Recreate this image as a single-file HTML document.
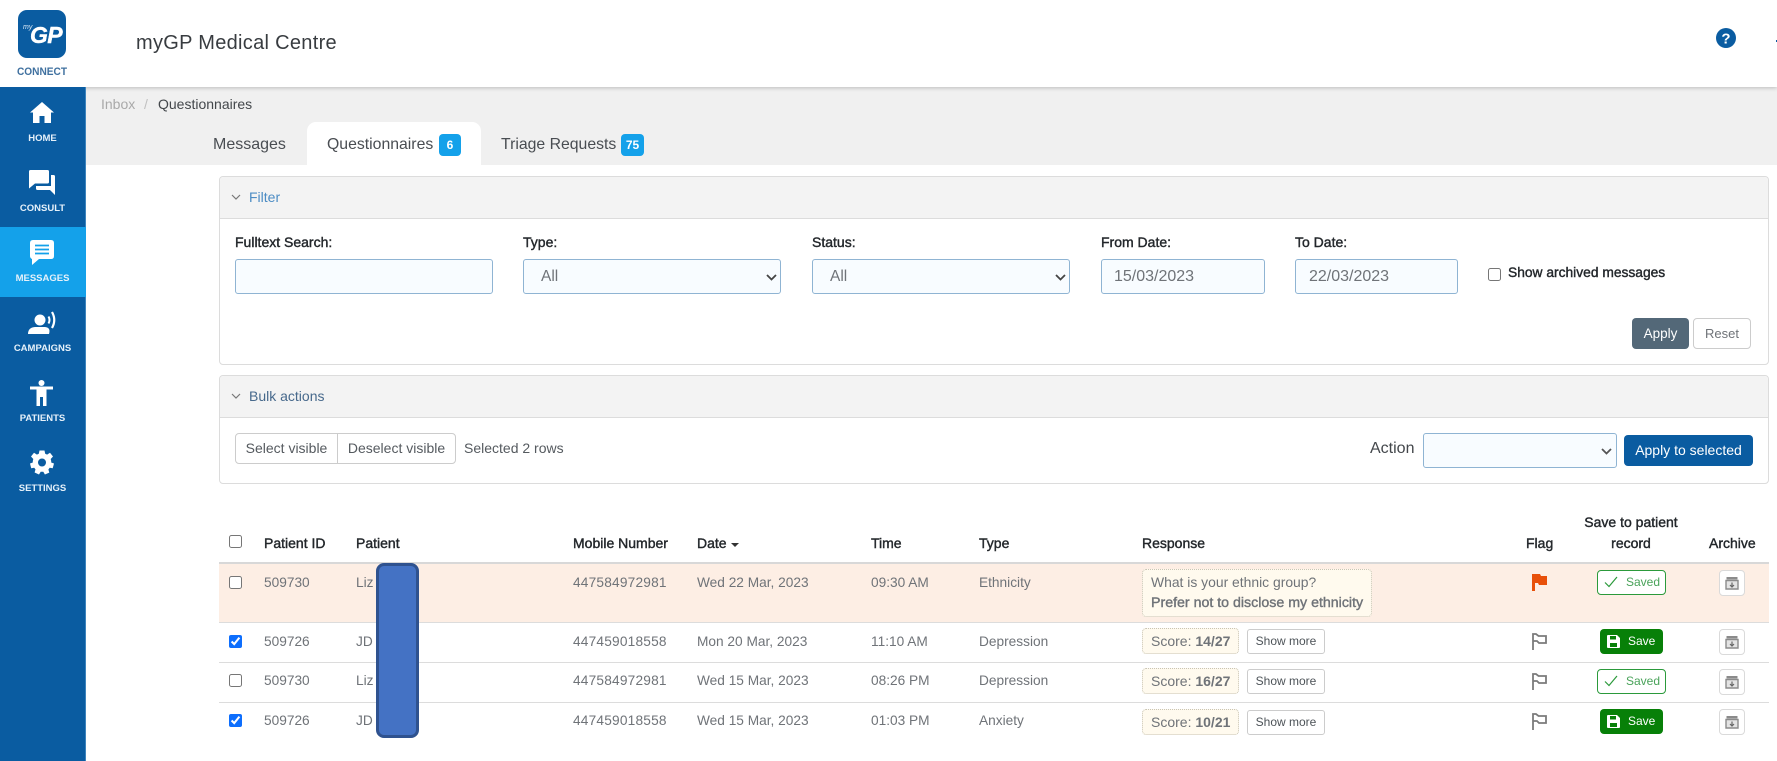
<!DOCTYPE html>
<html lang="en"><head><meta charset="utf-8"><title>myGP Connect</title>
<style>
*{box-sizing:border-box}
html,body{margin:0;padding:0;width:1777px;height:761px;overflow:hidden;background:#fff;font-family:"Liberation Sans",Arial,sans-serif;font-size:14px;color:#212529}
.a,.t{position:absolute}
.t{line-height:20px;white-space:nowrap}
.c{transform:translateX(-50%);text-align:center}
.m{-webkit-text-stroke:.4px currentColor}
.d{color:#6f7378;font-size:13.7px}
.n{letter-spacing:.2px}
.h{color:#23272b;-webkit-text-stroke:.4px #23272b;font-size:14px}
.side{left:0;top:87px;width:86px;height:674px;background:#0a5ca1;border-right:1px solid #3d84bd}
.lab{left:0;width:85px;text-align:center;color:#e6f1fa;font-size:9.5px;font-weight:bold;line-height:12px}
.panel{left:219px;width:1550px;border:1px solid #dcdcdc;border-radius:4px;background:#fff}
.ph{left:0;top:0;width:100%;height:41px;background:#f3f3f3;border-bottom:1px solid #dcdcdc;border-radius:4px 4px 0 0}
.inp{height:35px;background:#f8fcff;border:1px solid #8fb4d3;border-radius:3px;font:15.500px "Liberation Sans",sans-serif;color:#6f7378;padding:0 11px 0 17px;appearance:none;-webkit-appearance:none;outline:0}
input.inp{padding-left:13px;font-size:16px}
.btn{font-size:14px;text-align:center;border-radius:4px;line-height:29px}
.badge{background:#14a1ea;color:#fff;border-radius:4px;height:22px;text-align:center;font-size:12px;font-weight:bold;line-height:22px}
.line{left:219px;width:1550px;height:1px;background:#dcdcdc}
.cb{position:absolute;margin:0;width:13px;height:13px;accent-color:#0d6efd}
.score{left:1142px;width:97px;height:26px;background:#fffaee;border:1px dotted #c9c4b4;border-radius:4px;line-height:24px;padding-left:8px;color:#6f7378;white-space:nowrap}
.sm{left:1247px;width:78px;height:25px;background:#fff;border:1px solid #ccc;border-radius:3px;font-size:12px;line-height:23px;text-align:center;color:#4d5358}
.saved{left:1597px;width:69px;height:25px;border:1px solid #2b9a3b;border-radius:4px;background:#fff;color:#4aa35a;font-size:12px;line-height:23px;padding-left:28px}
.save{left:1600px;width:63px;height:25px;background:#078008;border-radius:4px;color:#fff;font-size:12px;line-height:25px;padding-left:28px}
.arc{left:1719px;width:26px;height:26px;border:1px solid #dadada;border-radius:4px;background:#fff}
svg{position:absolute;display:block}
</style></head><body>

<!-- header -->
<div class="a" style="left:85px;top:87px;width:1692px;height:78px;background:#f0f0f0"></div>
<div class="a" style="left:0;top:0;width:1777px;height:87px;background:#fff;box-shadow:0 1px 4px rgba(0,0,0,.22)"></div>

<div class="a" style="left:18px;top:10px;width:48px;height:48px;background:#0a5ca1;border-radius:9px"></div>
<div class="t" style="left:23px;top:23px;font-size:7px;font-style:italic;color:#dbe9f5;line-height:10px">my</div>
<div class="t" style="left:30px;top:23px;font-size:23px;font-weight:bold;font-style:italic;color:#fff;line-height:24px;letter-spacing:-.6px;-webkit-text-stroke:.4px #fff">GP</div>
<div class="t c" style="left:42px;top:62px;font-size:11px;font-weight:bold;color:#3f709f;transform:translateX(-50%) scaleX(.92)">CONNECT</div>

<div class="t" style="left:136px;top:33px;font-size:20px;color:#383c40;letter-spacing:.3px">myGP Medical Centre</div>

<svg style="left:1716px;top:28px" width="20" height="20" viewBox="0 0 20 20"><circle cx="10" cy="10" r="10" fill="#0a5ca1"/><text x="10" y="15.500" text-anchor="middle" font-family="Liberation Sans" font-size="15" font-weight="bold" fill="#fff">?</text></svg>
<div class="a" style="left:1776px;top:40px;width:1px;height:2px;background:#0a5ca1"></div>

<!-- sidebar -->
<div class="a side"></div>
<div class="a" style="left:0;top:227px;width:86px;height:70px;background:#14a1ea"></div>

<svg style="left:30px;top:102px" width="24" height="21" viewBox="0 0 24 21"><path d="M12 0 24 10.500 21 10.500V21H14.500V14H9.500V21H3V10.500H0Z" fill="#fff"/></svg>
<div class="a lab" style="top:133px">HOME</div>

<svg style="left:29px;top:170px" width="26" height="25" viewBox="0 0 26 25"><path d="M1.500 0H18.500Q20 0 20 1.500V12Q20 13.500 18.500 13.500H6L0 18.500V1.500Q0 0 1.500 0Z" fill="#fff"/><path d="M22 5H24.500Q26 5 26 6.500V25L21 20H8.500Q7 20 7 18.500V16H22Z" fill="#fff"/></svg>
<div class="a lab" style="top:203px">CONSULT</div>

<svg style="left:30px;top:240px" width="24" height="25" viewBox="0 0 24 25"><path d="M3 0H21Q24 0 24 3V16Q24 19 21 19H9L2 25V19Q0 18 0 16V3Q0 0 3 0Z" fill="#fff"/><path d="M5 5.500H19M5 9.500H19M5 13.500H19" stroke="#14a1ea" stroke-width="1.800"/></svg>
<div class="a lab" style="top:273px">MESSAGES</div>

<svg style="left:28px;top:310px" width="28" height="24" viewBox="0 0 28 24"><circle cx="12" cy="10" r="5.500" fill="#fff"/><path d="M0 24Q0 17.500 7 17H17Q23 17.500 21 24Z" fill="#fff"/><path d="M20.500 6.500Q22.500 10 20.500 13.500" stroke="#fff" stroke-width="2" fill="none"/><path d="M24 2Q28.500 10 24 18" stroke="#fff" stroke-width="2.200" fill="none"/></svg>
<div class="a lab" style="top:343px">CAMPAIGNS</div>

<svg style="left:30px;top:380px" width="23" height="26" viewBox="0 0 23 26"><circle cx="11.500" cy="3" r="3" fill="#fff"/><path d="M0 6.500H23V9.500H16.500V26H13V17H10V26H6.500V9.500H0Z" fill="#fff"/></svg>
<div class="a lab" style="top:413px">PATIENTS</div>

<svg style="left:30px;top:450px" width="24" height="25" viewBox="0 0 24 24"><path fill="#fff" fill-rule="evenodd" d="M9.500 0h5l.7 3.300 1.900.8L20 2.300 23 6l-2.300 2.500.5 2v1.500l2.800 1-1.300 4.800-3-.5-1.300 1.700.9 3.100-4.400 1.900-1.600-2.700h-2.600L9 24l-4.400-2 .9-3.100-1.300-1.700-3 .5L0 13l2.800-1v-1.500l.5-2L1 6l3-3.700 2.900 1.800 1.900-.8zM12 8a4 4 0 1 0 0 8 4 4 0 0 0 0-8z"/></svg>
<div class="a lab" style="top:483px">SETTINGS</div>

<!-- breadcrumb + tabs -->
<div class="t" style="left:101px;top:94px;font-size:14px;color:#a9a9a9">Inbox</div>
<div class="t" style="left:144px;top:94px;font-size:14px;color:#c0c0c0">/</div>
<div class="t" style="left:158px;top:94px;font-size:14px;color:#43474b">Questionnaires</div>

<div class="a" style="left:307px;top:122px;width:174px;height:43px;background:#fff;border-radius:9px 9px 0 0"></div>
<div class="t" style="left:213px;top:135px;font-size:16px;color:#494d52">Messages</div>
<div class="t" style="left:327px;top:135px;font-size:15.800px;color:#494d52">Questionnaires</div>
<div class="a badge" style="left:439px;top:134px;width:22px">6</div>
<div class="t" style="left:501px;top:135px;font-size:15.800px;color:#494d52">Triage Requests</div>
<div class="a badge" style="left:621px;top:134px;width:23px">75</div>

<!-- filter panel -->
<div class="a panel" style="top:176px;height:189px"><div class="a ph" style="height:42px"></div></div>
<svg style="left:231px;top:194px" width="10" height="6" viewBox="0 0 10 6"><path d="M1 1l4 4 4-4" fill="none" stroke="#777" stroke-width="1.200"/></svg>
<div class="t" style="left:249px;top:187px;font-size:14px;color:#4c8cc4">Filter</div>

<div class="t h" style="left:235px;top:232px">Fulltext Search:</div>
<input class="a inp" style="left:235px;top:259px;width:258px" type="text">
<div class="t h" style="left:523px;top:232px">Type:</div>
<select class="a inp" style="left:523px;top:259px;width:258px"><option>All</option></select>
<svg style="left:766px;top:274px" width="11" height="7" viewBox="0 0 11 7"><path d="M1 1l4.500 4.500L10 1" fill="none" stroke="#444" stroke-width="1.800"/></svg>
<div class="t h" style="left:812px;top:232px">Status:</div>
<select class="a inp" style="left:812px;top:259px;width:258px"><option>All</option></select>
<svg style="left:1055px;top:274px" width="11" height="7" viewBox="0 0 11 7"><path d="M1 1l4.500 4.500L10 1" fill="none" stroke="#444" stroke-width="1.800"/></svg>
<div class="t h" style="left:1101px;top:232px">From Date:</div>
<input class="a inp" style="left:1101px;top:259px;width:164px;padding-left:12px" value="15/03/2023">
<div class="t h" style="left:1295px;top:232px">To Date:</div>
<input class="a inp" style="left:1295px;top:259px;width:163px" value="22/03/2023">
<input class="cb" type="checkbox" style="left:1488px;top:268px">
<div class="t h" style="left:1508px;top:263px;font-size:13.800px">Show archived messages</div>

<div class="a btn" style="left:1632px;top:318px;width:57px;height:31px;background:#536878;color:#fff;line-height:31px;font-size:13.500px">Apply</div>
<div class="a btn" style="left:1693px;top:318px;width:58px;height:31px;border:1px solid #ccc;color:#6f7378;font-size:13px">Reset</div>

<!-- bulk panel -->
<div class="a panel" style="top:375px;height:109px"><div class="a ph" style="height:42px"></div></div>
<svg style="left:231px;top:393px" width="10" height="6" viewBox="0 0 10 6"><path d="M1 1l4 4 4-4" fill="none" stroke="#777" stroke-width="1.200"/></svg>
<div class="t" style="left:249px;top:386px;font-size:14px;color:#47698c">Bulk actions</div>
<div class="a btn" style="left:235px;top:433px;width:103px;height:31px;border:1px solid #ccc;border-radius:4px 0 0 4px;color:#555a5f">Select visible</div>
<div class="a btn" style="left:337px;top:433px;width:119px;height:31px;border:1px solid #ccc;border-radius:0 4px 4px 0;color:#555a5f">Deselect visible</div>
<div class="t" style="left:464px;top:438px;font-size:14px;color:#555a5f">Selected 2 rows</div>
<div class="t" style="left:1370px;top:439px;font-size:16px;color:#43474b">Action</div>
<select class="a inp" style="left:1423px;top:433px;width:194px"><option></option></select>
<svg style="left:1601px;top:448px" width="11" height="7" viewBox="0 0 11 7"><path d="M1 1l4.500 4.500L10 1" fill="none" stroke="#555" stroke-width="1.800"/></svg>
<div class="a btn" style="left:1624px;top:435px;width:129px;height:31px;background:#0a5ca1;color:#fff;line-height:31px">Apply to selected</div>

<!-- table -->
<div class="a" style="left:219px;top:563px;width:1550px;height:59px;background:#fdeee4"></div>
<div class="a line" style="top:562px;height:2px;background:#d8d8d8"></div>
<div class="a line" style="top:622px"></div>
<div class="a line" style="top:662px"></div>
<div class="a line" style="top:702px"></div>

<input class="cb" type="checkbox" style="left:229px;top:535px">
<div class="t h" style="left:264px;top:533px">Patient ID</div>
<div class="t h" style="left:356px;top:533px">Patient</div>
<div class="t h" style="left:573px;top:533px">Mobile Number</div>
<div class="t h" style="left:697px;top:533px">Date</div>
<div class="a" style="left:731px;top:543px;width:0;height:0;border-left:4px solid transparent;border-right:4px solid transparent;border-top:4px solid #333"></div>
<div class="t h" style="left:871px;top:533px">Time</div>
<div class="t h" style="left:979px;top:533px">Type</div>
<div class="t h" style="left:1142px;top:533px">Response</div>
<div class="t h" style="left:1526px;top:533px">Flag</div>
<div class="t h c" style="left:1631px;top:512px">Save to patient</div>
<div class="t h c" style="left:1631px;top:533px">record</div>
<div class="t h" style="left:1709px;top:533px">Archive</div>

<!-- row 1 -->
<input class="cb" type="checkbox" style="left:229px;top:576px">
<div class="t d" style="left:264px;top:573px">509730</div>
<div class="t d" style="left:356px;top:573px">Liz</div>
<div class="t d n" style="left:573px;top:573px">447584972981</div>
<div class="t d" style="left:697px;top:573px">Wed 22 Mar, 2023</div>
<div class="t d" style="left:871px;top:573px">09:30 AM</div>
<div class="t d" style="left:979px;top:573px">Ethnicity</div>
<div class="a" style="left:1142px;top:569px;width:230px;height:48px;background:#fffaee;border:1px dotted #c9c4b4;border-radius:4px"></div>
<div class="t d" style="left:1151px;top:572px;font-size:13.900px">What is your ethnic group?</div>
<div class="t d m" style="left:1151px;top:593px;font-size:14.200px">Prefer not to disclose my ethnicity</div>
<svg style="left:1532px;top:574px" width="15" height="17" viewBox="0 0 15 17"><path d="M0 0H8L9 2H15V11H7L6 9H3V17H0Z" fill="#e8500a"/></svg>
<div class="a saved" style="top:570px">Saved</div>
<svg style="left:1604px;top:576px" width="14" height="12" viewBox="0 0 14 12"><path d="M1 6.500l4 4L13 1" fill="none" stroke="#2b9a3b" stroke-width="1.200"/></svg>
<div class="a arc" style="top:570px"></div>
<svg style="left:1725px;top:576px" width="14" height="14" viewBox="0 0 14 14"><path d="M1.500 1H12.500V3.500H1.500Z" fill="#8b8b8b"/><path d="M1 4.500H13V13H1Z" fill="#e4e4e4" stroke="#8b8b8b" stroke-width="1.400"/><path d="M7 6.500V10.500M5 9l2 2 2-2" fill="none" stroke="#666" stroke-width="1.200"/></svg>

<!-- row 2 -->
<input class="cb" type="checkbox" checked style="left:229px;top:635px">
<div class="t d" style="left:264px;top:632px">509726</div>
<div class="t d" style="left:356px;top:632px">JD</div>
<div class="t d n" style="left:573px;top:632px">447459018558</div>
<div class="t d" style="left:697px;top:632px">Mon 20 Mar, 2023</div>
<div class="t d" style="left:871px;top:632px">11:10 AM</div>
<div class="t d" style="left:979px;top:632px">Depression</div>
<div class="a score" style="top:628px">Score: <b>14/27</b></div>
<div class="a sm" style="top:629px">Show more</div>
<svg style="left:1532px;top:633px" width="15" height="17" viewBox="0 0 15 17"><path d="M1 17V1H4L6.500 3H14V10H7L5 8H1" fill="none" stroke="#7b7b7b" stroke-width="1.800"/></svg>
<div class="a save" style="top:629px">Save</div>
<svg style="left:1607px;top:635px" width="13" height="13" viewBox="0 0 13 13"><path fill="#fff" fill-rule="evenodd" d="M0 1Q0 0 1 0H10L13 3V12Q13 13 12 13H1Q0 13 0 12ZM3 1V4.500H9V1ZM3 8V12H10V8Z"/></svg>
<div class="a arc" style="top:629px"></div>
<svg style="left:1725px;top:635px" width="14" height="14" viewBox="0 0 14 14"><path d="M1.500 1H12.500V3.500H1.500Z" fill="#8b8b8b"/><path d="M1 4.500H13V13H1Z" fill="#e4e4e4" stroke="#8b8b8b" stroke-width="1.400"/><path d="M7 6.500V10.500M5 9l2 2 2-2" fill="none" stroke="#666" stroke-width="1.200"/></svg>

<!-- row 3 -->
<input class="cb" type="checkbox" style="left:229px;top:674px">
<div class="t d" style="left:264px;top:671px">509730</div>
<div class="t d" style="left:356px;top:671px">Liz</div>
<div class="t d n" style="left:573px;top:671px">447584972981</div>
<div class="t d" style="left:697px;top:671px">Wed 15 Mar, 2023</div>
<div class="t d" style="left:871px;top:671px">08:26 PM</div>
<div class="t d" style="left:979px;top:671px">Depression</div>
<div class="a score" style="top:668px">Score: <b>16/27</b></div>
<div class="a sm" style="top:669px">Show more</div>
<svg style="left:1532px;top:673px" width="15" height="17" viewBox="0 0 15 17"><path d="M1 17V1H4L6.500 3H14V10H7L5 8H1" fill="none" stroke="#7b7b7b" stroke-width="1.800"/></svg>
<div class="a saved" style="top:669px">Saved</div>
<svg style="left:1604px;top:675px" width="14" height="12" viewBox="0 0 14 12"><path d="M1 6.500l4 4L13 1" fill="none" stroke="#2b9a3b" stroke-width="1.200"/></svg>
<div class="a arc" style="top:669px"></div>
<svg style="left:1725px;top:675px" width="14" height="14" viewBox="0 0 14 14"><path d="M1.500 1H12.500V3.500H1.500Z" fill="#8b8b8b"/><path d="M1 4.500H13V13H1Z" fill="#e4e4e4" stroke="#8b8b8b" stroke-width="1.400"/><path d="M7 6.500V10.500M5 9l2 2 2-2" fill="none" stroke="#666" stroke-width="1.200"/></svg>

<!-- row 4 -->
<input class="cb" type="checkbox" checked style="left:229px;top:714px">
<div class="t d" style="left:264px;top:711px">509726</div>
<div class="t d" style="left:356px;top:711px">JD</div>
<div class="t d n" style="left:573px;top:711px">447459018558</div>
<div class="t d" style="left:697px;top:711px">Wed 15 Mar, 2023</div>
<div class="t d" style="left:871px;top:711px">01:03 PM</div>
<div class="t d" style="left:979px;top:711px">Anxiety</div>
<div class="a score" style="top:709px">Score: <b>10/21</b></div>
<div class="a sm" style="top:710px">Show more</div>
<svg style="left:1532px;top:713px" width="15" height="17" viewBox="0 0 15 17"><path d="M1 17V1H4L6.500 3H14V10H7L5 8H1" fill="none" stroke="#7b7b7b" stroke-width="1.800"/></svg>
<div class="a save" style="top:709px">Save</div>
<svg style="left:1607px;top:715px" width="13" height="13" viewBox="0 0 13 13"><path fill="#fff" fill-rule="evenodd" d="M0 1Q0 0 1 0H10L13 3V12Q13 13 12 13H1Q0 13 0 12ZM3 1V4.500H9V1ZM3 8V12H10V8Z"/></svg>
<div class="a arc" style="top:709px"></div>
<svg style="left:1725px;top:715px" width="14" height="14" viewBox="0 0 14 14"><path d="M1.500 1H12.500V3.500H1.500Z" fill="#8b8b8b"/><path d="M1 4.500H13V13H1Z" fill="#e4e4e4" stroke="#8b8b8b" stroke-width="1.400"/><path d="M7 6.500V10.500M5 9l2 2 2-2" fill="none" stroke="#666" stroke-width="1.200"/></svg>

<!-- redaction -->
<div class="a" style="left:376px;top:563px;width:43px;height:175px;background:#4472c4;border:3.500px solid #2f528f;border-radius:8px"></div>
</body></html>
